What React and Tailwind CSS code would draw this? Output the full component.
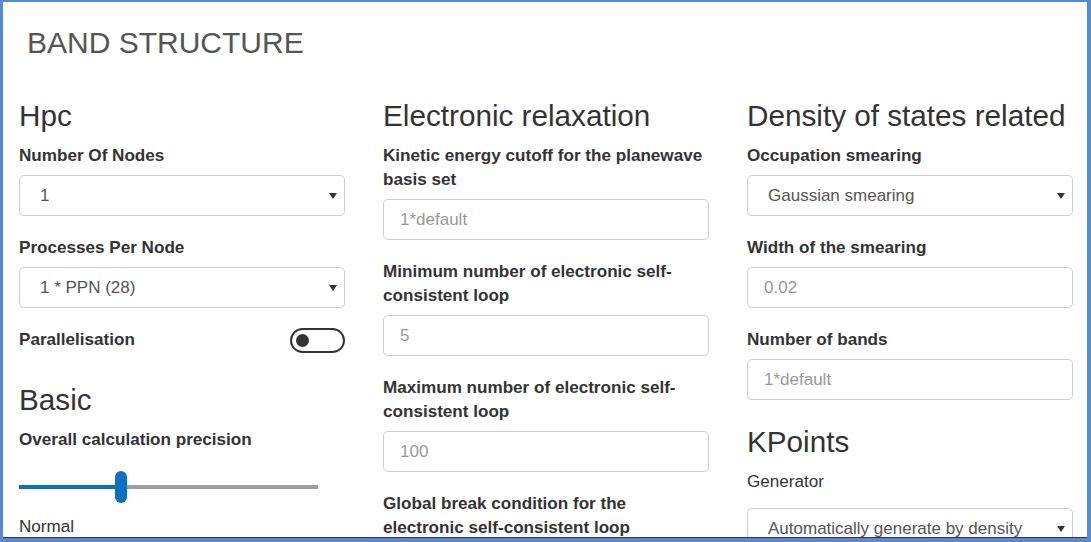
import React from 'react';

const font = { fontFamily: '"Liberation Sans", Arial, sans-serif' };

function Arrow() {
  return (
    <svg width="8" height="6" viewBox="0 0 8 6" className="shrink-0">
      <path d="M0 0 L8 0 L4 6 Z" fill="#333" />
    </svg>
  );
}

function Heading({ children, className = '' }) {
  return (
    <h3 className={`text-[29.7px] leading-[32px] h-[32px] text-[#333] font-normal mb-[12px] whitespace-nowrap ${className}`}>
      {children}
    </h3>
  );
}

function Label({ children, bold = true, className = 'mb-[7px]' }) {
  return (
    <div className={`text-[17.1px] leading-[24px] text-[#333] ${bold ? 'font-bold' : 'font-normal'} ${className}`}>
      {children}
    </div>
  );
}

function Select({ value }) {
  return (
    <div className="h-[41px] border border-[#ccc] rounded-[5px] bg-white flex items-center justify-between pl-[20px] pr-[7px] text-[17px] text-[#555] whitespace-nowrap">
      <span>{value}</span>
      <Arrow />
    </div>
  );
}

function Input({ placeholder }) {
  return (
    <div className="h-[41px] border border-[#ccc] rounded-[5px] bg-white flex items-center pl-[16px] text-[17px] text-[#999]">
      {placeholder}
    </div>
  );
}

function Field({ label, children, last = false }) {
  return (
    <div className={last ? '' : 'mb-[20px]'}>
      <Label>{label}</Label>
      {children}
    </div>
  );
}

export default function App() {
  return (
    <div style={font} className="w-[1091px] h-[542px] bg-[#5a89cf] pt-[2px] pl-[3px] pr-[4px] pb-[4px]">
      <div className="h-[536px] bg-white border-b border-[#2e3440] overflow-hidden pl-[16px] pr-[14px]">
        <h1 className="text-[30px] leading-[33px] text-[#555] font-normal mt-[24px] ml-[8px]">
          BAND STRUCTURE
        </h1>

        <div className="grid grid-cols-3 gap-x-[38px] mt-[41px]">
          {/* Hpc + Basic */}
          <div>
            <Heading>Hpc</Heading>
            <Field label="Number Of Nodes">
              <Select value="1" />
            </Field>
            <Field label="Processes Per Node" last>
              <Select value="1 * PPN (28)" />
            </Field>
            <div className="mt-[19px] h-[26px] flex items-center justify-between">
              <span className="text-[17.1px] font-bold text-[#333]">Parallelisation</span>
              <div className="w-[55px] h-[25px] rounded-full border-[2.5px] border-[#333] flex items-center pl-[4px]">
                <div className="w-[13px] h-[13px] rounded-full bg-[#333]" />
              </div>
            </div>

            <Heading className="mt-[31px]">Basic</Heading>
            <Label className="mb-[19px]">Overall calculation precision</Label>
            <div className="relative w-[299px] h-[32px] flex items-center">
              <div className="w-[101px] h-[4px] bg-[#0b6fc4]" />
              <div className="flex-1 h-[4px] bg-[#9e9e9e]" />
              <div className="absolute left-[96px] top-0 w-[12px] h-[32px] rounded-full bg-[#0b6fc4]" />
            </div>
            <Label bold={false} className="mt-[12px]">Normal</Label>
          </div>

          {/* Electronic relaxation */}
          <div>
            <Heading>Electronic relaxation</Heading>
            <Field label="Kinetic energy cutoff for the planewave basis set">
              <Input placeholder="1*default" />
            </Field>
            <Field label="Minimum number of electronic self-consistent loop">
              <Input placeholder="5" />
            </Field>
            <Field label="Maximum number of electronic self-consistent loop">
              <Input placeholder="100" />
            </Field>
            <Label className="mb-0">Global break condition for the electronic self-consistent loop</Label>
          </div>

          {/* Density of states */}
          <div>
            <Heading>Density of states related</Heading>
            <Field label="Occupation smearing">
              <Select value="Gaussian smearing" />
            </Field>
            <Field label="Width of the smearing">
              <Input placeholder="0.02" />
            </Field>
            <Field label="Number of bands" last>
              <Input placeholder="1*default" />
            </Field>

            <Heading className="mt-[26px]">KPoints</Heading>
            <Label bold={false} className="mb-[14px]">Generator</Label>
            <Select value="Automatically generate by density" />
          </div>
        </div>
      </div>
    </div>
  );
}
